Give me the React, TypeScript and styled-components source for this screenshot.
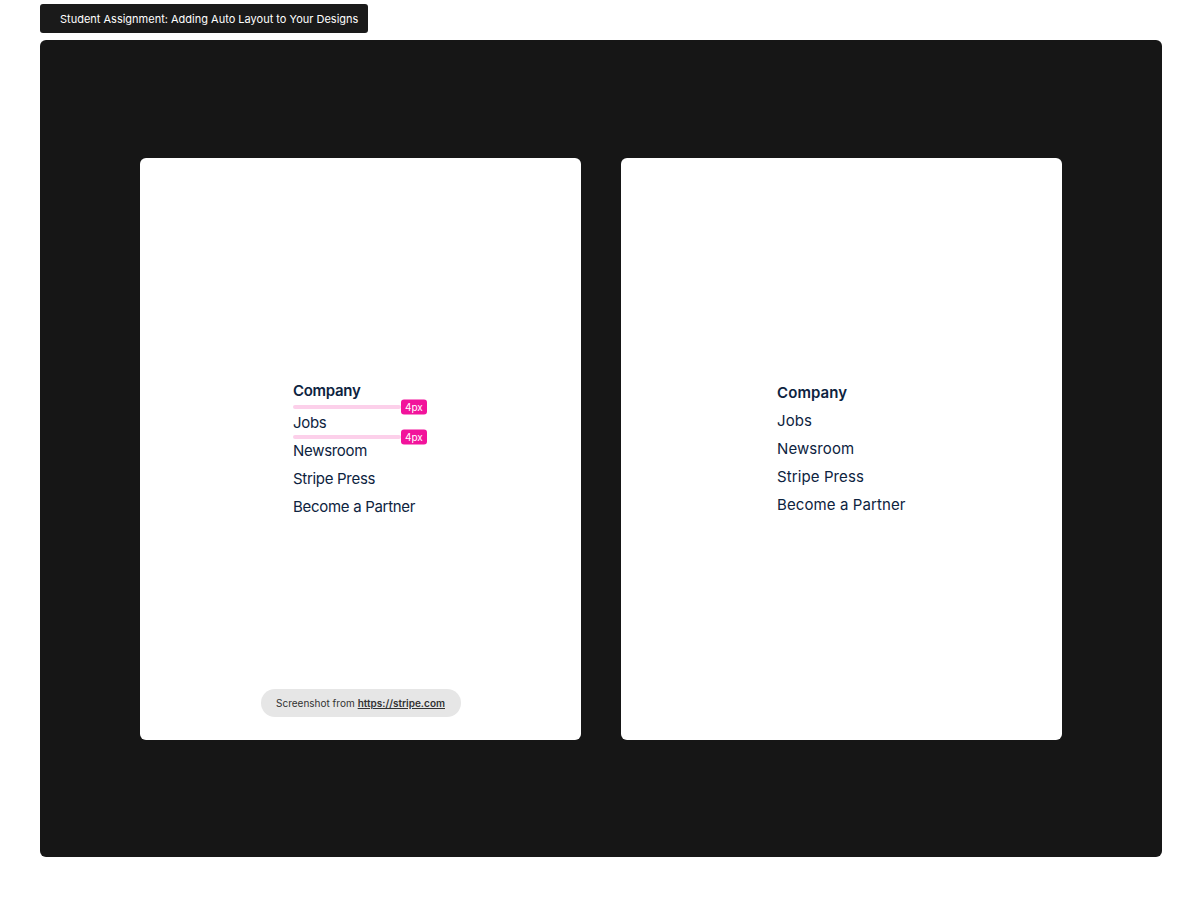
import React from 'react';
import styled, { createGlobalStyle } from 'styled-components';

const GlobalStyle = createGlobalStyle`
    html, body {
        margin: 0;
        padding: 0;
        background: #ffffff;
        font-family: Inter, "Noto Sans", sans-serif;
    }
`;

const items = ['Jobs', 'Newsroom', 'Stripe Press', 'Become a Partner'];

const Spacer: React.FC<{ size: number }> = ({ size }) => (
    <Gap size={size}>
        <Bar />
        <Badge>4px</Badge>
    </Gap>
);

const App: React.FC = () => {
    return (
        <Page>
            <GlobalStyle />
            <TitleTag>Student Assignment: Adding Auto Layout to Your Designs</TitleTag>
            <Frame>
                <Card>
                    <List>
                        <Heading>Company</Heading>
                        <Spacer size={8} />
                        <Item>Jobs</Item>
                        <Spacer size={4} />
                        <Item>Newsroom</Item>
                        <Item $top={4}>Stripe Press</Item>
                        <Item $top={4}>Become a Partner</Item>
                    </List>
                    <Source>
                        Screenshot from <SourceLink>https://stripe.com</SourceLink>
                    </Source>
                </Card>
                <Card>
                    <List $gap={4} $wide>
                        <Heading>Company</Heading>
                        {items.map((label) => (
                            <Item key={label}>{label}</Item>
                        ))}
                    </List>
                </Card>
            </Frame>
        </Page>
    );
};

export default App;

const Page = styled.div`
    display: flex;
    flex-direction: column;
    align-items: flex-start;
    padding: 4px 40px 0 40px;
    width: 1122px;
`;

const TitleTag = styled.div`
    height: 29px;
    width: 328px;
    box-sizing: border-box;
    padding-left: 20px;
    display: flex;
    align-items: center;
    background: #1a1a1a;
    border-radius: 3px;
    color: #ffffff;
    font-size: 11px;
`;

const Frame = styled.div`
    margin-top: 7px;
    width: 1122px;
    height: 817px;
    box-sizing: border-box;
    padding: 118px 100px;
    display: flex;
    gap: 40px;
    background: #161616;
    border-radius: 6px;
`;

const Card = styled.div`
    position: relative;
    width: 441px;
    height: 582px;
    display: flex;
    align-items: center;
    justify-content: center;
    background: #ffffff;
    border-radius: 6px;
`;

const List = styled.div<{ $gap?: number; $wide?: boolean }>`
    display: flex;
    flex-direction: column;
    gap: ${({ $gap }) => $gap ?? 0}px;
    width: 135px;
    color: #0d2340;
    font-size: 15px;
    line-height: 24px;
    letter-spacing: ${({ $wide }) => ($wide ? '0.1px' : '-0.3px')};
    transform: translateX(${({ $wide }) => ($wide ? 3 : 0)}px);
`;

const Heading = styled.div`
    font-weight: 600;
`;

const Item = styled.div<{ $top?: number }>`
    font-weight: 400;
    margin-top: ${({ $top }) => $top ?? 0}px;
    white-space: nowrap;
`;

const Gap = styled.div<{ size: number }>`
    position: relative;
    height: ${({ size }) => size}px;
    display: flex;
    align-items: center;
`;

const Bar = styled.div`
    width: 108px;
    height: 4px;
    background: #fcd0ea;
    border-radius: 2px;
`;

const Badge = styled.div`
    position: absolute;
    left: 108px;
    top: 50%;
    transform: translateY(-50%);
    height: 15px;
    padding: 0 4px;
    display: flex;
    align-items: center;
    background: #f2139b;
    color: #ffffff;
    border-radius: 3px;
    font-size: 10px;
    line-height: 15px;
    letter-spacing: 0;
`;

const Source = styled.div`
    position: absolute;
    bottom: 23px;
    left: 50%;
    transform: translateX(-50%);
    height: 28px;
    width: 200px;
    display: flex;
    align-items: center;
    justify-content: center;
    background: #e6e6e6;
    border-radius: 14px;
    color: #333333;
    font-size: 10px;
    white-space: nowrap;
`;

const SourceLink = styled.span`
    margin-left: 3px;
    font-weight: 600;
    text-decoration: underline;
`;
